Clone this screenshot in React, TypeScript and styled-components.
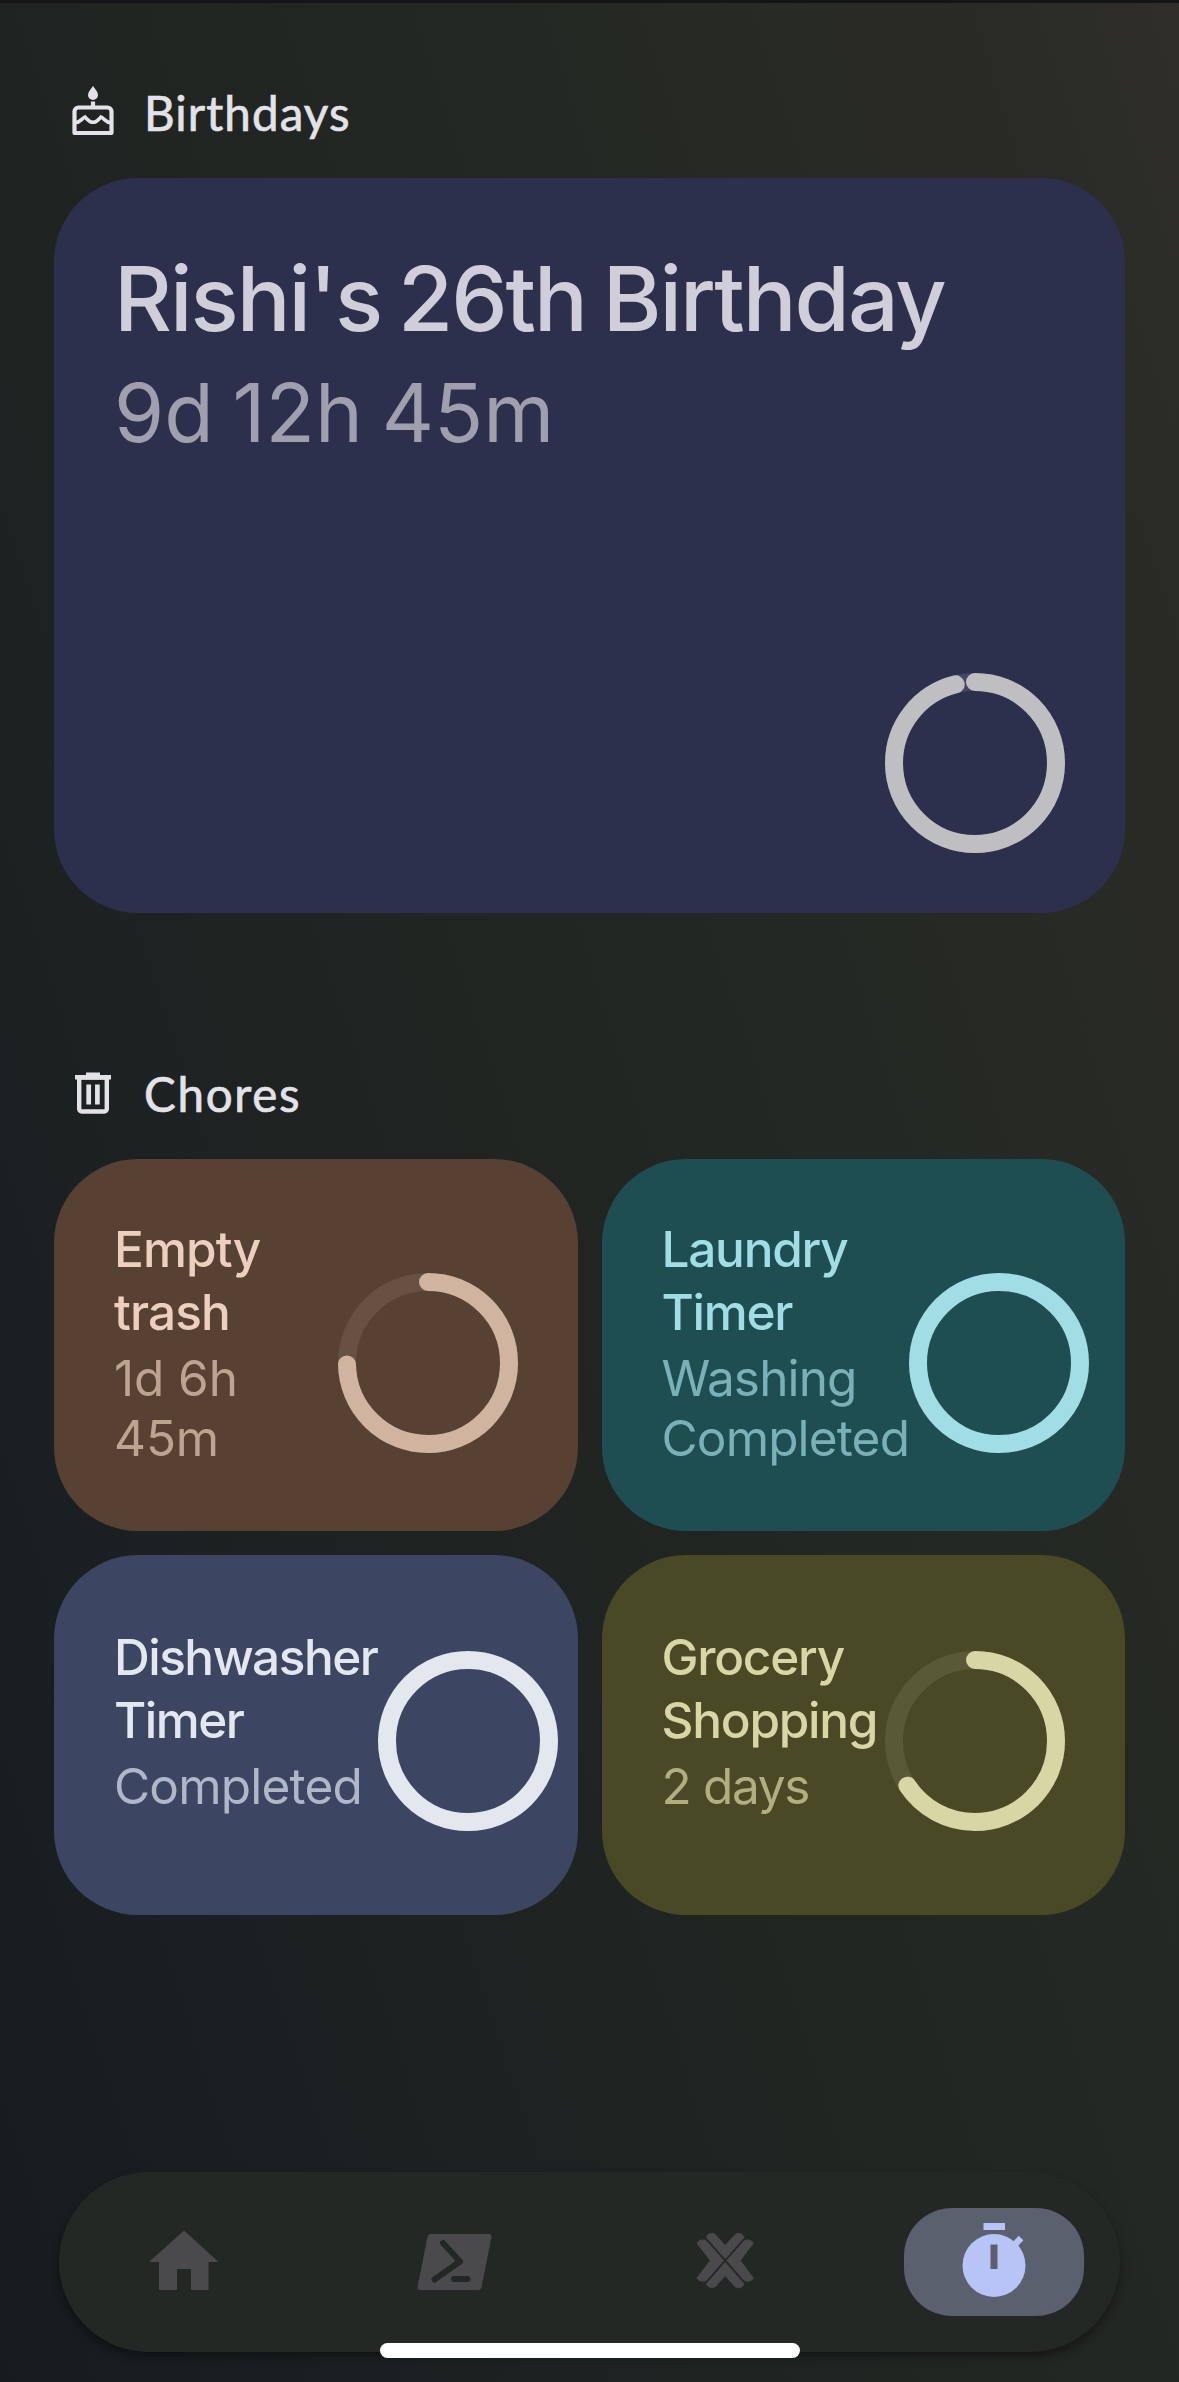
import React from "react";
import styled, { createGlobalStyle } from "styled-components";

const GlobalStyle = createGlobalStyle`
  *, *::before, *::after { box-sizing: border-box; }
  html, body { margin: 0; padding: 0; background: #1c2120; }
`;

const Screen = styled.main`
  position: relative;
  display: flex;
  flex-direction: column;
  width: 1179px;
  height: 2382px;
  overflow: hidden;
  padding: 0 54px;
  border-top: 3px solid #131517;
  background: linear-gradient(72deg, #161b1f 0%, #1b2122 22%, #202522 46%, #252924 70%, #2b2b26 90%, #2f2e29 100%);
  font-family: Inter, "Liberation Sans", sans-serif;
`;

const Section = styled.section<{ $top: number }>`
  display: flex;
  flex-direction: column;
  padding-top: ${(p) => p.$top}px;
`;

const SectionHeader = styled.header`
  display: flex;
  align-items: center;
  height: 60px;
  margin-bottom: 36px;
  color: #e3e2e8;
`;

const HeaderIcon = styled.svg`
  width: 50px;
  height: 54px;
  margin: 1px 26px 0 14px;
  overflow: visible;
`;

const SectionTitle = styled.h2<{ $spacing: number }>`
  margin: 2px 0 0;
  font-family: Lato, "Open Sans", sans-serif;
  font-size: 47.5px;
  font-weight: 400;
  line-height: 60px;
  letter-spacing: ${(p) => p.$spacing}px;
  -webkit-text-stroke: 0.7px currentColor;
`;

const FeatureCard = styled.article`
  display: flex;
  flex-direction: column;
  justify-content: space-between;
  height: 735px;
  padding: 66px 60px 60px;
  border-radius: 84px;
  background: #2d304d;
`;

const FeatureTitle = styled.h3`
  margin: 0;
  color: #d0ced8;
  font-size: 89.5px;
  font-weight: 500;
  line-height: 110px;
  letter-spacing: -2px;
  word-spacing: -5px;
  white-space: nowrap;
`;

const FeatureTime = styled.p`
  margin: 1px 0 0;
  color: #a09fae;
  font-size: 81px;
  font-weight: 400;
  line-height: 116px;
  letter-spacing: 0;
  word-spacing: -4px;
`;

const FeatureFooter = styled.div`
  display: flex;
  justify-content: flex-end;
`;

const Grid = styled.div`
  display: grid;
  grid-template-columns: 1fr 1fr;
  grid-template-rows: 372px 360px;
  gap: 24px;
`;

const Card = styled.article<{ $bg: string }>`
  display: flex;
  justify-content: space-between;
  min-width: 0;
  padding: 0 60px;
  border-radius: 84px;
  background: ${(p) => p.$bg};
`;

const CardText = styled.div<{ $width: number; $top: number }>`
  flex: none;
  width: ${(p) => p.$width}px;
  padding-top: ${(p) => p.$top}px;
  white-space: pre-line;
`;

const CardTitle = styled.h3<{ $color: string; $spacing: number }>`
  margin: 0 -20px 0 0;
  color: ${(p) => p.$color};
  font-size: 49.5px;
  font-weight: 500;
  line-height: 63px;
  letter-spacing: ${(p) => p.$spacing}px;
`;

const CardTime = styled.p<{ $color: string; $spacing: number }>`
  margin: 4px -20px 0 0;
  color: ${(p) => p.$color};
  font-size: 49.5px;
  font-weight: 400;
  line-height: 60px;
  letter-spacing: ${(p) => p.$spacing}px;
`;

const RingSvg = styled.svg<{ $top: number }>`
  flex: none;
  width: 180px;
  height: 180px;
  margin-top: ${(p) => p.$top}px;
`;

const NavBar = styled.nav`
  display: flex;
  align-items: center;
  width: 1061px;
  height: 180px;
  margin: 257px 0 0 5px;
  padding: 0 35px;
  border-radius: 90px;
  background: #242824;
  box-shadow: 0 5px 10px rgba(0, 0, 0, 0.38);
`;

const NavItem = styled.button<{ $active?: boolean; $gap: number }>`
  display: flex;
  align-items: center;
  justify-content: center;
  width: 180px;
  height: 108px;
  margin: 0 0 0 ${(p) => p.$gap}px;
  padding: 0;
  border: 0;
  border-radius: 48px;
  background: ${(p) => (p.$active ? "#5a606d" : "transparent")};
  color: ${(p) => (p.$active ? "#b8c3f6" : "#4a4a4d")};
`;

const NavIcon = styled.svg`
  flex: none;
  width: 90px;
  height: 90px;
`;

const HomeIndicator = styled.div`
  position: absolute;
  left: 380px;
  top: 2340px;
  width: 420px;
  height: 15px;
  border-radius: 8px;
  background: #fff;
`;

type RingProps = { value: number; color: string; track: string; top?: number };

function Ring({ value, color, track, top = 0 }: RingProps) {
  const circumference = 2 * Math.PI * 81;
  return (
    <RingSvg viewBox="0 0 180 180" $top={top}>
      <circle cx="90" cy="90" r="81" fill="none" stroke={track} strokeWidth="18" />
      <circle
        cx="90"
        cy="90"
        r="81"
        fill="none"
        stroke={color}
        strokeWidth="18"
        strokeLinecap={value < 1 ? "round" : "butt"}
        strokeDasharray={value < 1 ? `${circumference * value} ${circumference}` : undefined}
        transform="rotate(-90 90 90)"
      />
    </RingSvg>
  );
}

const chores = [
  { title: "Empty\ntrash", time: "1d 6h\n45m", bg: "#574133", fg: "#edcfbd", sub: "#bda491", ring: "#d1b49f", track: "#665143", value: 0.746, width: 150, textTop: 58.5, ringTop: 114, titleSpacing: -0.9, timeSpacing: -0.1 },
  { title: "Laundry\nTimer", time: "Washing\nCompleted", bg: "#1f4e52", fg: "#a1dde5", sub: "#7ab1b9", ring: "#a1dde5", track: "#1f4e52", value: 1, width: 247.5, textTop: 58.5, ringTop: 114, titleSpacing: -1.25, timeSpacing: -0.85 },
  { title: "Dishwasher\nTimer", time: "Completed", bg: "#3c4662", fg: "#e2e8ed", sub: "#b0b7c6", ring: "#e2e8ed", track: "#3c4662", value: 1, width: 264, textTop: 70.5, ringTop: 96, titleSpacing: -1.5, timeSpacing: -0.8 },
  { title: "Grocery\nShopping", time: "2 days", bg: "#4a4925", fg: "#d7d7a5", sub: "#b0af80", ring: "#d7d7a5", track: "#5a5937", value: 0.656, width: 223, textTop: 70.5, ringTop: 96, titleSpacing: -1.25, timeSpacing: -1.3 },
];

export default function App() {
  return (
    <>
      <GlobalStyle />
      <Screen>
        <Section $top={79}>
          <SectionHeader>
            <HeaderIcon viewBox="0 0 50 54">
              <path d="M25 0c3 4 5 6.400 5 9a5 5 0 0 1-10 0c0-2.600 2-5 5-9z" fill="currentColor" />
              <path d="M25 15.500v6M6.500 47V25.500a4 4 0 0 1 4-4h29a4 4 0 0 1 4 4V47z" fill="none" stroke="currentColor" strokeWidth="4.200" strokeLinejoin="round" />
              <path d="M8 36.500c4 0 5.500-3.800 9-5.500 3.500 3.500 4.500 5.300 8 5.300s4.500-1.800 8-5.300c3.500 1.700 5 5.500 9 5.500" fill="none" stroke="currentColor" strokeWidth="3.600" />
            </HeaderIcon>
            <SectionTitle $spacing={1.1}>Birthdays</SectionTitle>
          </SectionHeader>
          <FeatureCard>
            <div>
              <FeatureTitle>Rishi's 26th Birthday</FeatureTitle>
              <FeatureTime>9d 12h 45m</FeatureTime>
            </div>
            <FeatureFooter>
              <Ring value={0.96} color="#bfbfc1" track="#43456a" />
            </FeatureFooter>
          </FeatureCard>
        </Section>

        <Section $top={150}>
          <SectionHeader>
            <HeaderIcon viewBox="0 -1 50 54">
              <path d="M18 4.500h14v2.500h11v4.500H7V7h11z" fill="currentColor" />
              <path d="M11.200 9.500h27.600V41a2.500 2.500 0 0 1-2.500 2.500H13.700a2.500 2.500 0 0 1-2.500-2.500z" fill="none" stroke="currentColor" strokeWidth="4.400" />
              <path d="M20.700 16.500v20M29.400 16.500v20" fill="none" stroke="currentColor" strokeWidth="4.700" />
            </HeaderIcon>
            <SectionTitle $spacing={1.7}>Chores</SectionTitle>
          </SectionHeader>
          <Grid>
            {chores.map((c) => (
              <Card key={c.title} $bg={c.bg}>
                <CardText $width={c.width} $top={c.textTop}>
                  <CardTitle $color={c.fg} $spacing={c.titleSpacing}>{c.title}</CardTitle>
                  <CardTime $color={c.sub} $spacing={c.timeSpacing}>{c.time}</CardTime>
                </CardText>
                <Ring value={c.value} color={c.ring} track={c.track} top={c.ringTop} />
              </Card>
            ))}
          </Grid>
        </Section>

        <NavBar>
          <NavItem $gap={0} aria-label="Home">
            <NavIcon viewBox="0 0 90 90">
              <path d="M45 13.500 79.500 45H69.500V73H52V52H38V73H20V45H10z" fill="currentColor" />
            </NavIcon>
          </NavItem>
          <NavItem $gap={90} aria-label="Terminal">
            <NavIcon viewBox="0 0 90 90">
              <path d="M21.500 17H80a2.500 2.500 0 0 1 2.500 3L72.500 70a3.500 3.500 0 0 1-3.500 3H11a2.500 2.500 0 0 1-2.500-3l10-50a3.500 3.500 0 0 1 3-3z" fill="currentColor" />
              <path d="M34 26 51 44.500 25.500 62.500M45 62H58.500" fill="none" stroke="#242824" strokeWidth="6" strokeLinecap="round" strokeLinejoin="round" />
            </NavIcon>
          </NavItem>
          <NavItem $gap={90} aria-label="Media">
            <NavIcon viewBox="0 0 90 90">
              <g fill="currentColor" stroke="currentColor" strokeWidth="0.800" strokeLinejoin="round">
                <path d="M46.200 41.700 27.400 20.300C28.500 16.500 34 15 36.500 17.800L46.200 28.500l9.700-10.700c2.500-2.800 8-1.300 9.100 2.500z" />
                <path d="M46.200 45.500 27.400 66.900c1.100 3.800 6.600 5.300 9.100 2.500l9.700-10.700 9.700 10.700c2.500 2.800 8 1.300 9.100-2.500z" />
                <path d="M44.600 43.600 27.200 23.800c-3-1.600-7.200-.8-9.300 2.200L31.200 43.600 17.900 61.200c2.100 3 6.300 3.800 9.300 2.200z" />
                <path d="M47.800 43.600 65.200 23.800c3-1.600 7.200-.8 9.300 2.200L61.200 43.600 74.500 61.200c-2.100 3-6.300 3.800-9.300 2.200z" />
              </g>
            </NavIcon>
          </NavItem>
          <NavItem $gap={90} $active aria-label="Timers">
            <NavIcon viewBox="0 0 90 90">
              <path d="M34.500 6h21.500v7H34.500z" fill="currentColor" />
              <circle cx="45" cy="48.500" r="31.500" fill="currentColor" />
              <path d="M65.500 28 72 21" stroke="currentColor" strokeWidth="6.500" />
              <path d="M41.500 27.500h7V52h-7z" fill="#5a606d" />
            </NavIcon>
          </NavItem>
        </NavBar>
        <HomeIndicator />
      </Screen>
    </>
  );
}
